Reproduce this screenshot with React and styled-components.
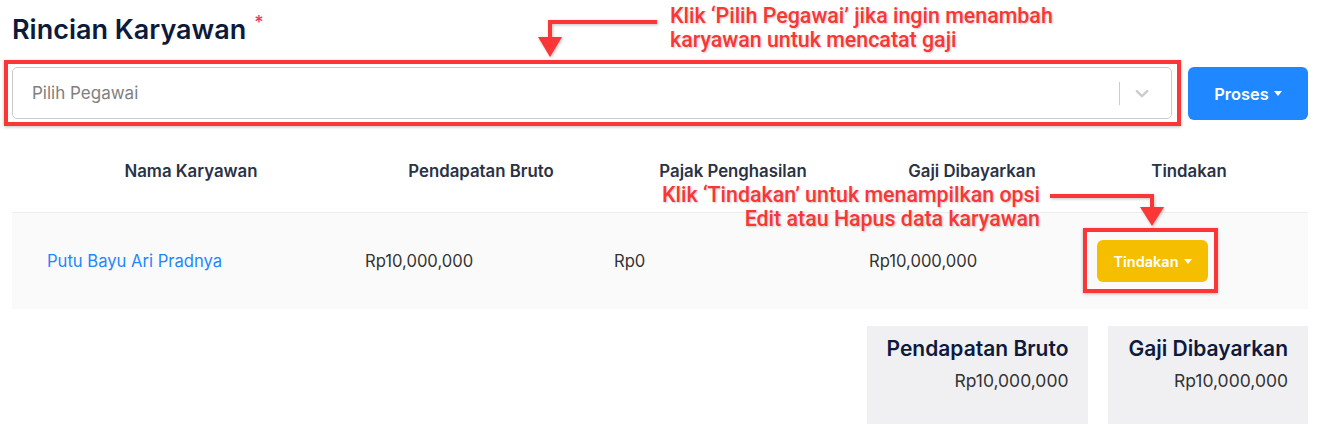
import styled, { createGlobalStyle } from 'styled-components';

const GlobalStyle = createGlobalStyle`
  html, body {
    margin: 0;
    padding: 0;
    background: #fff;
  }
  body {
    font-family: Inter, "Noto Sans", sans-serif;
    color: #333;
  }
`;

const ANNOT_RED = '#fa3636';

const Page = styled.div`
  position: relative;
  width: 1322px;
  height: 432px;
  overflow: hidden;
  padding: 0 14px 0 12px;
  box-sizing: border-box;
`;

const Title = styled.h2`
  margin: 0;
  padding-top: 15px;
  font-size: 27px;
  line-height: 30px;
  font-weight: 600;
  color: #0d1a3c;

  sup {
    color: #f0355a;
    font-size: 18px;
    font-weight: 500;
    margin-left: 8px;
    vertical-align: 10px;
    line-height: 0;
  }
`;

const SelectRow = styled.div`
  display: flex;
  align-items: flex-start;
  gap: 16px;
  margin-top: 22px;
`;

const SelectBox = styled.div`
  flex: 1;
  height: 52px;
  box-sizing: border-box;
  border: 1px solid #cccccc;
  border-radius: 5px;
  display: flex;
  align-items: center;
  background: #fff;
`;

const Placeholder = styled.div`
  flex: 1;
  padding-left: 19px;
  font-size: 17px;
  color: #808080;
`;

const Separator = styled.span`
  width: 1px;
  height: 23px;
  background: #cccccc;
`;

const Indicator = styled.div`
  display: flex;
  align-items: center;
  padding: 0 18px 0 11px;
  color: #cccccc;
`;

const Caret = styled.span`
  display: inline-block;
  margin-left: 5px;
  border-top: 5px solid currentColor;
  border-left: 4.5px solid transparent;
  border-right: 4.5px solid transparent;
  vertical-align: 3px;
`;

const Button = styled.button`
  border: none;
  font-family: inherit;
  color: #fff;
  font-weight: 600;
  cursor: pointer;
  display: inline-flex;
  align-items: center;
  justify-content: center;
  background: ${({ $variant }) => ($variant === 'warning' ? '#f5bf00' : '#1f87ff')};
  width: ${({ $w }) => $w}px;
  height: ${({ $h }) => $h}px;
  font-size: ${({ $size }) => $size}px;
  border-radius: ${({ $radius }) => $radius}px;
`;

const HeaderRow = styled.div`
  display: grid;
  grid-template-columns: 358px 222px 282px 196px 238px;
  padding: 40px 0 30px;
  line-height: 22px;
  font-size: 16.8px;
  font-weight: 600;
  color: #2a3245;
  text-align: center;
`;

const BodyRow = styled.div`
  display: grid;
  grid-template-columns: 318px 249px 255px 228px 1fr;
  align-items: center;
  height: 96px;
  padding-left: 35px;
  background: #fafafa;
  border-top: 1px solid #ececec;
  font-size: 16.6px;
  color: #333;
`;

const NameLink = styled.a`
  color: #1f87ff;
  text-decoration: none;
  cursor: pointer;
`;

const Totals = styled.div`
  display: flex;
  justify-content: flex-end;
  gap: 20px;
  margin-top: 17px;
`;

const TotalCard = styled.div`
  background: #f0f0f2;
  padding: 9px 20px 30px;
  text-align: right;
  height: 98px;
  box-sizing: border-box;
`;

const TotalLabel = styled.div`
  font-size: 21px;
  line-height: 28px;
  font-weight: 600;
  color: #0d1a3c;
`;

const TotalValue = styled.div`
  margin-top: 7px;
  font-size: 17.5px;
  line-height: 22px;
  color: #333;
`;

/* tutorial overlays */
const Highlight = styled.div`
  position: absolute;
  border: 4px solid ${ANNOT_RED};
  box-sizing: border-box;
  box-shadow: 0 1px 3px rgba(0, 0, 0, 0.25);
  pointer-events: none;
`;

const Note = styled.div`
  position: absolute;
  font-family: Roboto, "Liberation Sans", sans-serif;
  font-weight: 500;
  font-size: 21.4px;
  line-height: 24px;
  color: ${ANNOT_RED};
  text-shadow: 1px 1px 2px rgba(0, 0, 0, 0.22);
  text-align: ${({ $align }) => $align || 'left'};
  white-space: nowrap;
`;

const ArrowLayer = styled.svg`
  position: absolute;
  left: 0;
  top: 0;
  overflow: visible;
  pointer-events: none;
  filter: drop-shadow(1px 1px 1.5px rgba(0, 0, 0, 0.25));
`;

const columns = [
  'Nama Karyawan',
  'Pendapatan Bruto',
  'Pajak Penghasilan',
  'Gaji Dibayarkan',
  'Tindakan',
];

const employee = {
  name: 'Putu Bayu Ari Pradnya',
  bruto: 'Rp10,000,000',
  pajak: 'Rp0',
  gaji: 'Rp10,000,000',
};

const totals = [
  { label: 'Pendapatan Bruto', value: 'Rp10,000,000' },
  { label: 'Gaji Dibayarkan', value: 'Rp10,000,000' },
];

const ChevronDown = () => (
  <svg width="22" height="22" viewBox="0 0 20 20" fill="currentColor" aria-hidden="true">
    <path d="M4.516 7.548c0.436-0.446 1.043-0.481 1.576 0l3.908 3.747 3.908-3.747c0.533-0.481 1.141-0.446 1.574 0 0.436 0.445 0.408 1.197 0 1.615-0.406 0.418-4.695 4.502-4.695 4.502-0.217 0.223-0.502 0.335-0.787 0.335s-0.57-0.112-0.789-0.335c0 0-4.287-4.084-4.695-4.502s-0.436-1.17 0-1.615z" />
  </svg>
);

const Arrows = () => (
  <ArrowLayer width="1322" height="432">
    <g fill="none" stroke={ANNOT_RED} strokeWidth="4">
      <polyline points="657,22 550,22 550,39" />
      <polyline points="1050,196 1152,196 1152,209" />
    </g>
    <g fill={ANNOT_RED}>
      <polygon points="538,37 562,37 550,57" />
      <polygon points="1140,207 1164,207 1152,226" />
    </g>
  </ArrowLayer>
);

export default function App() {
  return (
    <>
      <GlobalStyle />
      <Page>
        <Title>
          Rincian Karyawan<sup>*</sup>
        </Title>

        <SelectRow>
          <SelectBox>
            <Placeholder>Pilih Pegawai</Placeholder>
            <Separator />
            <Indicator>
              <ChevronDown />
            </Indicator>
          </SelectBox>
          <Button $w={120} $h={53} $size={16.4} $radius={6}>
            Proses<Caret />
          </Button>
        </SelectRow>

        <HeaderRow>
          {columns.map((c) => (
            <div key={c}>{c}</div>
          ))}
        </HeaderRow>

        <BodyRow>
          <NameLink>{employee.name}</NameLink>
          <div>{employee.bruto}</div>
          <div>{employee.pajak}</div>
          <div>{employee.gaji}</div>
          <div>
            <Button $variant="warning" $w={111} $h={42} $size={14.5} $radius={6}>
              Tindakan<Caret />
            </Button>
          </div>
        </BodyRow>

        <Totals>
          {totals.map((t) => (
            <TotalCard key={t.label}>
              <TotalLabel>{t.label}</TotalLabel>
              <TotalValue>{t.value}</TotalValue>
            </TotalCard>
          ))}
        </Totals>

        <Highlight style={{ left: 4, top: 60, width: 1177, height: 66 }} />
        <Highlight style={{ left: 1083, top: 228, width: 135, height: 65 }} />
        <Arrows />
        <Note style={{ left: 670, top: 4 }}>
          Klik ‘Pilih Pegawai’ jika ingin menambah
          <br />
          karyawan untuk mencatat gaji
        </Note>
        <Note $align="right" style={{ right: 282, top: 183 }}>
          Klik ‘Tindakan’ untuk menampilkan opsi
          <br />
          Edit atau Hapus data karyawan
        </Note>
      </Page>
    </>
  );
}
